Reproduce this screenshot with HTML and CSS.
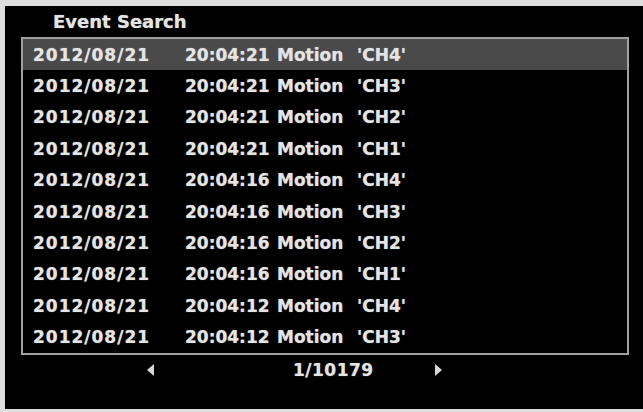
FILE: index.html
```html
<!DOCTYPE html>
<html lang="en">
<head>
    <meta charset="UTF-8">
    <title>Event Search</title>
    <link rel="stylesheet" href="styles.css">
</head>
<body>
    <div class="screen">
        <div class="title">Event Search</div>

        <div class="event-list">
            <div class="event-row selected"><span class="date">2012/08/21</span><span class="time">20:04:21</span><span class="type">Motion</span><span class="ch">'CH4'</span></div>
            <div class="event-row"><span class="date">2012/08/21</span><span class="time">20:04:21</span><span class="type">Motion</span><span class="ch">'CH3'</span></div>
            <div class="event-row"><span class="date">2012/08/21</span><span class="time">20:04:21</span><span class="type">Motion</span><span class="ch">'CH2'</span></div>
            <div class="event-row"><span class="date">2012/08/21</span><span class="time">20:04:21</span><span class="type">Motion</span><span class="ch">'CH1'</span></div>
            <div class="event-row"><span class="date">2012/08/21</span><span class="time">20:04:16</span><span class="type">Motion</span><span class="ch">'CH4'</span></div>
            <div class="event-row"><span class="date">2012/08/21</span><span class="time">20:04:16</span><span class="type">Motion</span><span class="ch">'CH3'</span></div>
            <div class="event-row"><span class="date">2012/08/21</span><span class="time">20:04:16</span><span class="type">Motion</span><span class="ch">'CH2'</span></div>
            <div class="event-row"><span class="date">2012/08/21</span><span class="time">20:04:16</span><span class="type">Motion</span><span class="ch">'CH1'</span></div>
            <div class="event-row"><span class="date">2012/08/21</span><span class="time">20:04:12</span><span class="type">Motion</span><span class="ch">'CH4'</span></div>
            <div class="event-row"><span class="date">2012/08/21</span><span class="time">20:04:12</span><span class="type">Motion</span><span class="ch">'CH3'</span></div>
        </div>

        <div class="pager">
            <span class="arrow arrow-left"></span>
            <span class="page-num">1/10179</span>
            <span class="arrow arrow-right"></span>
        </div>
    </div>
</body>
</html>
```

FILE: styles.css
```css
* {
    margin: 0;
    padding: 0;
    box-sizing: border-box;
}

body {
    background: #dedede;
    font-family: 'DejaVu Sans', Verdana, sans-serif;
    font-weight: bold;
    color: #e4e4e4;
}

.screen {
    margin: 6px 0 0 5px;
    height: 403px;
    background: #000;
    text-shadow: 0 0 1px rgba(255,255,255,0.6);
}

.title {
    height: 31px;
    line-height: 31px;
    padding-left: 48px;
    font-size: 18px;
}

.event-list {
    margin-left: 16px;
    width: 608px;
    height: 318px;
    border: 2px solid #a0a0a0;
    display: grid;
    grid-template-rows: repeat(10, 1fr);
}

.event-row {
    display: flex;
    align-items: center;
    padding-left: 10px;
    font-size: 17px;
}

.event-row.selected {
    background: #4a4a4a;
}

.date {
    width: 152px;
    letter-spacing: 1px;
}

.time {
    width: 92px;
}

.type {
    width: 80px;
}

.pager {
    display: flex;
    align-items: center;
    height: 30px;
    padding-left: 142px;
    font-size: 17px;
}

.arrow {
    width: 0;
    height: 0;
    border-top: 6px solid transparent;
    border-bottom: 6px solid transparent;
}

.arrow-left {
    border-right: 7px solid #d8d8d8;
}

.arrow-right {
    border-left: 7px solid #d8d8d8;
}

.page-num {
    margin: 0 61px 0 139px;
    letter-spacing: 0.5px;
}
```
